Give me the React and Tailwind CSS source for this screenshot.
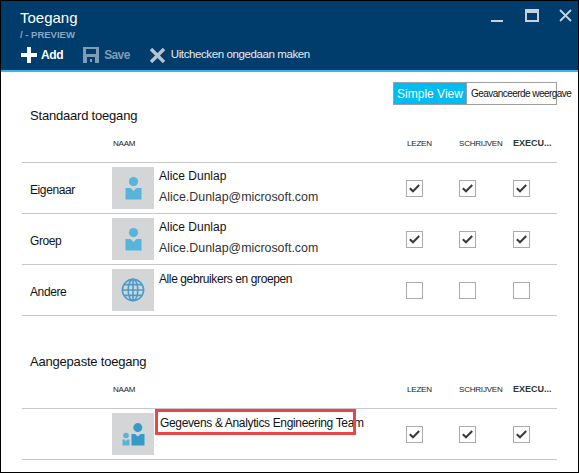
const SANS = 'font-["Liberation_Sans",Arial,sans-serif]'

/* thumbnails */
function PersonIcon() {
  return (
    <svg width="17" height="23" viewBox="0 0 17 23">
      <circle cx="8.500" cy="4.600" r="4.600" fill="#59b4d9" />
      <path d="M0.500 11h5l3 3 3-3h5v11.500H0.500z" fill="#59b4d9" />
    </svg>
  )
}

function GlobeIcon() {
  return (
    <svg width="24" height="24" viewBox="0 0 24 24" fill="none" stroke="#4a9cc9" strokeWidth="1.6">
      <circle cx="12" cy="12" r="10.6" />
      <ellipse cx="12" cy="12" rx="4.8" ry="10.6" />
      <path d="M12 1.4v21.2M1.4 12h21.2M3 6.6h18M3 17.4h18" />
    </svg>
  )
}

function GroupIcon() {
  return (
    <svg width="23" height="23" viewBox="0 0 23 23">
      <circle cx="15.800" cy="4.600" r="4.500" fill="#3999c6" />
      <path d="M9.500 11h3.500l2.800 2.600L18.600 11H22.500v11.500H9.500z" fill="#3999c6" />
      <circle cx="4" cy="12.500" r="2.800" fill="#59b4d9" />
      <path d="M0.500 16.500h2L4 18l1.500-1.500h2v6h-7z" fill="#59b4d9" />
    </svg>
  )
}

function Check({ on }) {
  return (
    <div className="w-[17px] h-[17px] border border-[#ababab] flex items-center justify-center bg-white">
      {on && (
        <svg width="11" height="9" viewBox="0 0 11 9" fill="none" stroke="#3a3a3a" strokeWidth="2">
          <path d="M0.8 4.2 4 7.300 10.200 1" />
        </svg>
      )}
    </div>
  )
}

const COLS = 'grid grid-cols-[90px_47px_247px_53px_54px_44px]'

function HeadRow() {
  return (
    <div className={`${COLS} w-[535px] h-[39px] pt-[1px] items-center text-[#222] border-b border-[#c8c8c8]`}>
      <span />
      <span className="col-span-2 text-[8px] pl-[1px] tracking-[-0.2px]">NAAM</span>
      <span className="text-[8px] pl-[1px] tracking-[-0.2px]">LEZEN</span>
      <span className="text-[8px] tracking-[-0.2px]">SCHRIJVEN</span>
      <span className="text-[9px] font-bold text-[#333] whitespace-nowrap">EXECU...</span>
    </div>
  )
}

function Row({ label, icon, children, checked }) {
  return (
    <div className={`${COLS} h-[51px] border-b-[1px] border-[#c8c8c8] items-center`}>
      <span className="pl-[8px] text-[12px] tracking-[-0.4px] text-[#111] mt-[3px]">{label}</span>
      <div className="w-[42px] h-[42px] bg-[#d3d5d7] flex items-center justify-center">{icon}</div>
      <div className="h-[42px] text-[12px] text-[#111]">{children}</div>
      <Check on={checked} />
      <Check on={checked} />
      <Check on={checked} />
    </div>
  )
}

function Person() {
  return (
    <>
      <div className="leading-[14px] mt-[2px]">Alice Dunlap</div>
      <div className="leading-[14px] mt-[7px] text-[#333] text-[12.400px]">Alice.Dunlap@microsoft.com</div>
    </>
  )
}

export default function App() {
  return (
    <div className={`w-[579px] h-[473px] bg-black p-[1px] ${SANS}`}>
      <div className="w-[577px] h-[471px] bg-white overflow-hidden">
        {/* header */}
        <header className="h-[71px] bg-[#003c6c] border-b-[2px] border-[#3ab4e0] px-[19px] text-white relative flex flex-col">
          <div className="text-[15px] leading-[20px] mt-[7px]">Toegang</div>
          <div className="text-[9.500px] leading-[12px] mt-[1px] font-bold text-[#8ba6bf]">/ - PREVIEW</div>
          <div className="flex items-center h-[20px] mt-[4px] pl-[1px] text-[12px]">
            <svg width="16" height="16" viewBox="0 0 16 16" fill="#fff"><path d="M6 0h4v6h6v4h-6v6H6v-6H0V6h6z" /></svg>
            <span className="ml-[4px] font-bold tracking-[-0.4px]">Add</span>
            <svg className="ml-[20px]" width="16" height="16" viewBox="0 0 16 16" fill="#7f9cb6">
              <path fillRule="evenodd" d="M0 0h16v16H0zM3 2v5h10V2zM4 10v6h8v-6zM7 12h2v3H7z" />
            </svg>
            <span className="ml-[5px] font-bold tracking-[-0.6px] text-[#7f9cb6]">Save</span>
            <svg className="ml-[20px]" width="15" height="15" viewBox="0 0 15 15" stroke="#b5c4d3" strokeWidth="3.400"><path d="M1 1l13 13M14 1 1 14" /></svg>
            <span className="ml-[6px] text-[#e6ecf2] text-[11.500px] tracking-[-0.4px]">Uitchecken ongedaan maken</span>
          </div>
          <div className="absolute right-[6px] top-[8px] flex items-start">
            <div className="w-[12px] h-[2px] bg-[#c7d2dd] mt-[11px]" />
            <div className="w-[14px] h-[13px] border-2 border-t-[4px] border-[#c7d2dd] ml-[22px]" />
            <svg className="ml-[20px]" width="13" height="13" viewBox="0 0 13 13" stroke="#c7d2dd" strokeWidth="1.800"><path d="M1 1l11 11M12 1 1 12" /></svg>
          </div>
        </header>

        <main className="relative pl-[21px]">
          {/* view toggle */}
          <div className="flex justify-end pr-[21px] pt-[10px]">
            <div className="flex h-[23px] w-[164px] border border-[#a0a0a0]">
              <span className="w-[73px] shrink-0 bg-[#00bcf2] border-r border-[#a0a0a0] text-white text-[12px] flex items-center justify-center whitespace-nowrap">Simple View</span>
              <span className="w-[89px] shrink-0 text-[10px] tracking-[-0.55px] text-[#111] flex items-center pl-[4px] whitespace-nowrap">Geavanceerde weergave</span>
            </div>
          </div>

          <h2 className="text-[13px] leading-[16px] tracking-[-0.2px] text-[#111] font-normal pl-[8px] mt-[3px]">Standaard toegang</h2>
          <HeadRow />
          <div className="w-[535px]">
            <Row label="Eigenaar" icon={<PersonIcon />} checked><Person /></Row>
            <Row label="Groep" icon={<PersonIcon />} checked><Person /></Row>
            <Row label="Andere" icon={<GlobeIcon />}>
              <div className="leading-[14px] mt-[3px] tracking-[-0.4px]">Alle gebruikers en groepen</div>
            </Row>
          </div>

          <h2 className="text-[13px] leading-[16px] tracking-[-0.2px] text-[#111] font-normal pl-[8px] mt-[38px]">Aangepaste toegang</h2>
          <HeadRow />
          <div className="w-[535px]">
            <Row label="" icon={<GroupIcon />} checked>
              <div className="leading-[14px] mt-[3px] pl-[1px] tracking-[-0.35px]">Gegevens &amp; Analytics Engineering Team</div>
            </Row>
          </div>

          {/* red annotation */}
          <div className="absolute left-[154px] top-[337px] w-[201px] h-[26px] border-[3px] border-[#e8474a]" />
        </main>
      </div>
    </div>
  )
}
